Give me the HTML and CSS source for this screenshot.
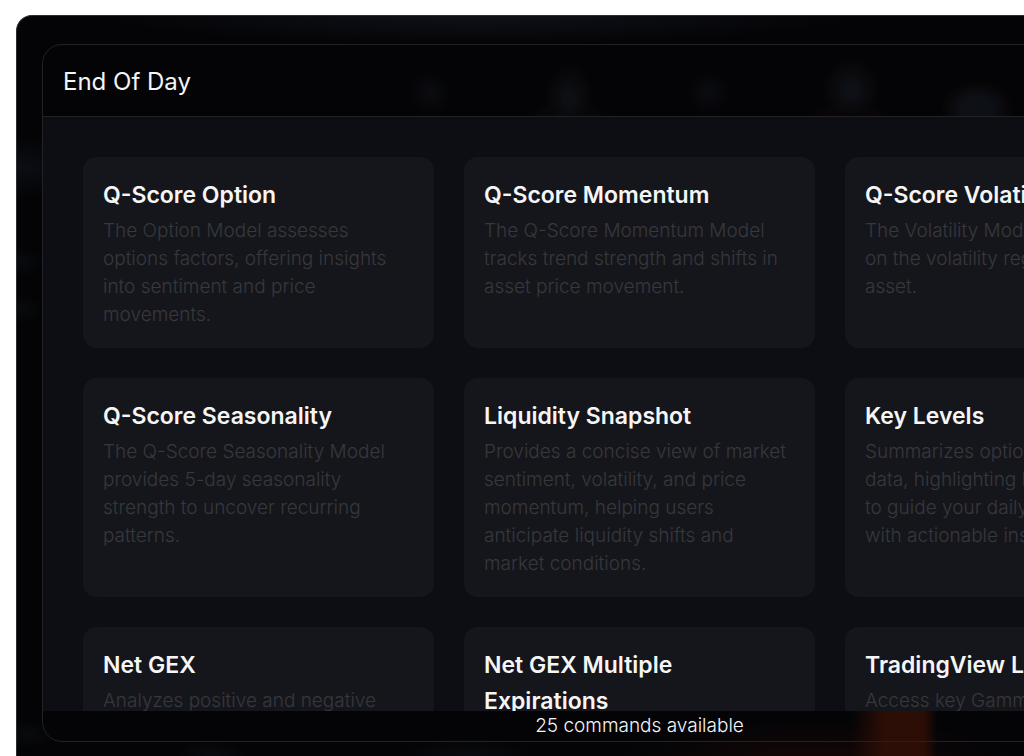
FILE: index.html
```html
<!DOCTYPE html>
<html lang="en">
<head>
  <meta charset="UTF-8">
  <meta name="viewport" content="width=device-width, initial-scale=1.0">
  <title>End Of Day</title>
  <link rel="stylesheet" href="styles.css">
</head>
<body>

  <div class="backdrop">
    <main class="modal">

      <!-- Header -->
      <header class="modal-header">
        <h1>End Of Day</h1>
      </header>

      <!-- Command list -->
      <div class="modal-body">
        <div class="grid">
          <a class="card" href="#q-score-option">
            <h2>Q-Score Option</h2>
            <p>The Option Model assesses options factors, offering insights into sentiment and price movements.</p>
          </a>
          <a class="card" href="#q-score-momentum">
            <h2>Q-Score Momentum</h2>
            <p>The Q-Score Momentum Model tracks trend strength and shifts in asset price movement.</p>
          </a>
          <a class="card" href="#q-score-volatility">
            <h2>Q-Score Volatility</h2>
            <p>The Volatility Model focuses<br>on the volatility regime of the<br>asset.</p>
          </a>
          <a class="card" href="#q-score-seasonality">
            <h2>Q-Score Seasonality</h2>
            <p>The Q-Score Seasonality Model provides 5-day seasonality strength to uncover recurring patterns.</p>
          </a>
          <a class="card" href="#liquidity-snapshot">
            <h2>Liquidity Snapshot</h2>
            <p>Provides a concise view of market sentiment, volatility, and price momentum, helping users anticipate liquidity shifts and market conditions.</p>
          </a>
          <a class="card" href="#key-levels">
            <h2>Key Levels</h2>
            <p>Summarizes options market<br>data, highlighting key levels<br>to guide your daily trading<br>with actionable insights.</p>
          </a>
          <a class="card" href="#net-gex">
            <h2>Net GEX</h2>
            <p>Analyzes positive and negative gamma exposure.</p>
          </a>
          <a class="card" href="#net-gex-multiple">
            <h2>Net GEX Multiple Expirations</h2>
            <p>Compares gamma exposure across expirations.</p>
          </a>
          <a class="card" href="#tradingview-levels">
            <h2>TradingView Levels</h2>
            <p>Access key Gamma Levels for TradingView.</p>
          </a>
        </div>
      </div>

      <!-- Footer -->
      <footer class="modal-footer">25 commands available</footer>

    </main>
  </div>

</body>
</html>
```

FILE: styles.css
```css
/* Global Styles */
* {
  box-sizing: border-box;
}

body {
  font-family: Inter, "Liberation Sans", sans-serif;
  background: #fff;
  color: #f5f5f6;
  margin: 0;
  height: 100vh;
  overflow: hidden;
  display: flex;
  padding: 15px 0 0 16px;
}

h1, h2, p {
  margin: 0;
}

/* Dark stage with faint glows behind the modal */
.backdrop {
  flex: 1;
  min-width: min-content;
  display: flex;
  padding: 28px 26px 14px 25px;
  border: solid #2b2d30;
  border-width: 1px 0 0 1px;
  border-radius: 16px 0 0 0;
  background:
    radial-gradient(22px 22px at 413px 77px, #0b0c11, transparent),
    radial-gradient(24px 34px at 552px 82px, #0c0f14 20%, #080608 80%, transparent),
    radial-gradient(42px 20px at 552px 104px, #090709 60%, transparent),
    radial-gradient(22px 22px at 692px 77px, #0b0c11, transparent),
    radial-gradient(28px 32px at 834px 74px, #0d1016 20%, #080608 80%, transparent),
    radial-gradient(40px 18px at 832px 102px, #0a0607 60%, transparent),
    radial-gradient(36px 28px at 960px 93px, #0e1018 40%, #080608 85%, transparent),
    radial-gradient(380px 28px at 460px 0, #0f1119, transparent),
    radial-gradient(70px 30px at 0 151px, #0c0e16, transparent),
    radial-gradient(24px 14px at 3px 246px, #080b0e, transparent),
    radial-gradient(22px 14px at 3px 293px, #080b0e, transparent),
    radial-gradient(30px 14px at 8px 718px, #080b0e, transparent),
    radial-gradient(36px 18px at 194px 740px, #090b10, transparent),
    radial-gradient(70px 20px at 450px 740px, #090b10, transparent),
    linear-gradient(90deg, transparent 834px, #2d0e06 868px, #2d0e06 906px, transparent 920px) 0 690px / 940px 70px no-repeat,
    radial-gradient(200px 40px at 800px 745px, #150806, transparent),
    #040406;
}

/* Modal */
.modal {
  flex: 1;
  min-width: min-content;
  min-height: 0;
  display: flex;
  flex-direction: column;
  border: 1px solid #212225;
  border-radius: 20px;
  overflow: hidden;
}

.modal-header {
  padding: 19px 20px 16px;
  border-bottom: 1px solid #212225;
}

.modal-header h1 {
  font-size: 24px;
  font-weight: 400;
  line-height: 36px;
}

.modal-body {
  flex: 1;
  min-height: 0;
  overflow: hidden;
  padding: 40px;
  background: #0d0e13;
}

.grid {
  display: grid;
  grid-template-columns: repeat(3, minmax(351px, 1fr));
  gap: 30px;
}

/* Cards */
.card {
  padding: 20px 20px 19px;
  border-radius: 14px;
  background: #15161b;
  color: inherit;
  text-decoration: none;
}

.card h2 {
  font-size: 23px;
  font-weight: 600;
  line-height: 36px;
}

.card p {
  margin-top: 4px;
  font-size: 19px;
  font-weight: 300;
  line-height: 28px;
  color: #37383d;
}

.modal-footer {
  font-size: 19px;
  font-weight: 300;
  line-height: 30px;
  text-align: center;
}
```
